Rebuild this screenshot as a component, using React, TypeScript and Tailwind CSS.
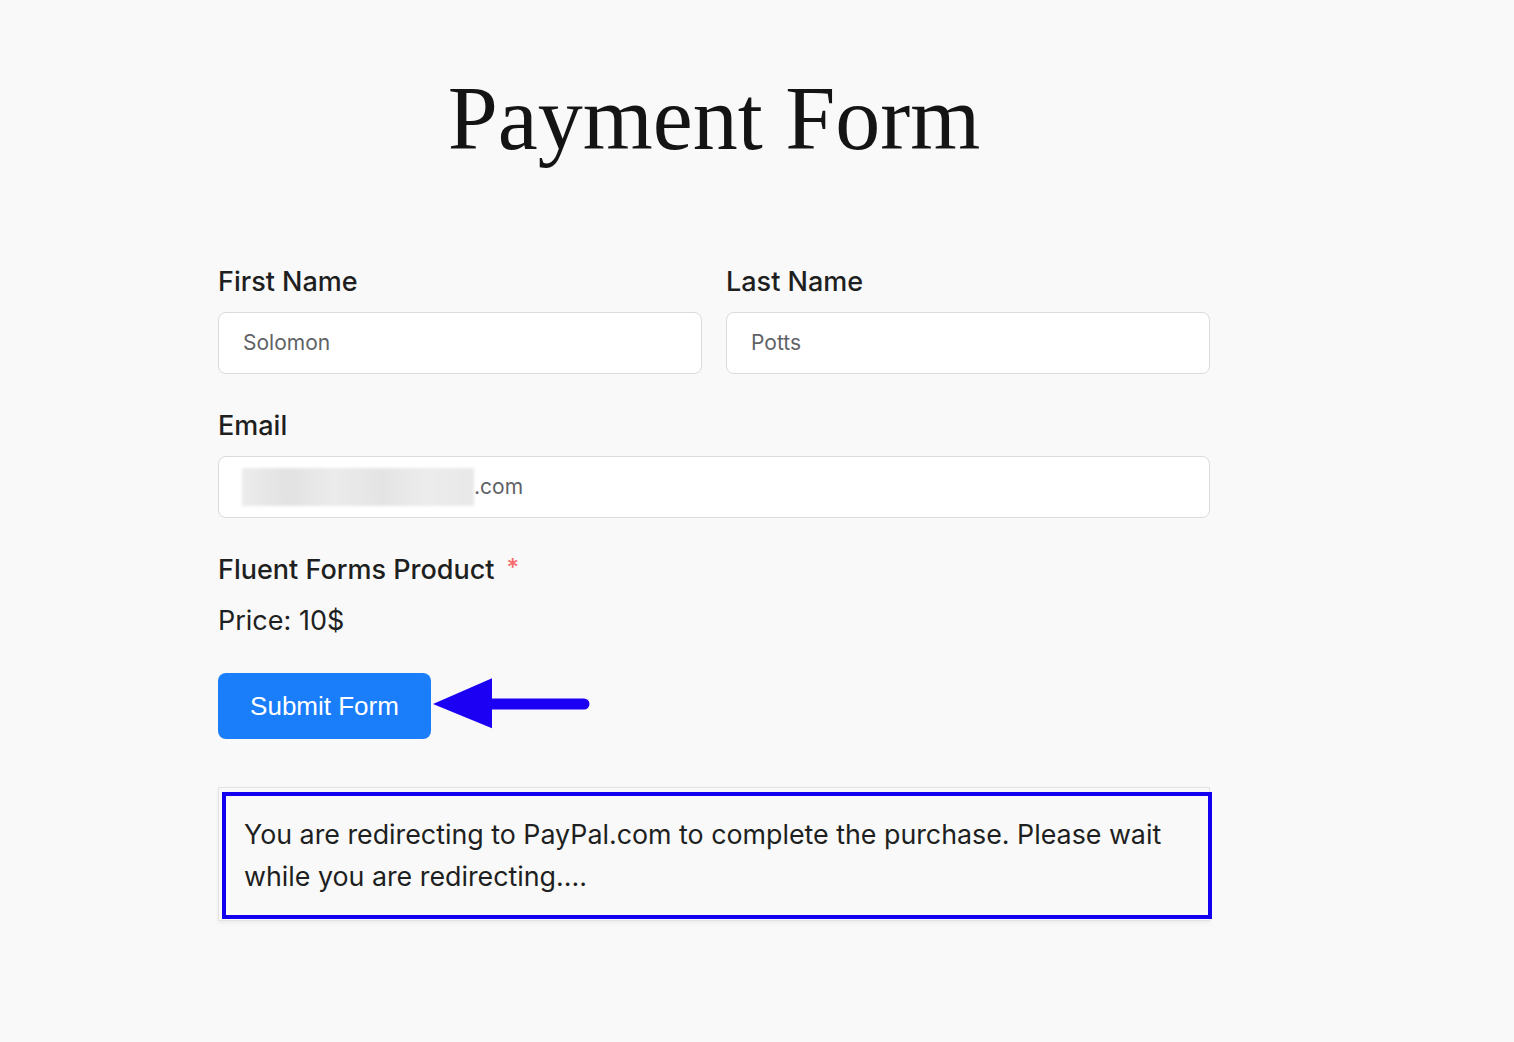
import React from "react";

const inter = "font-['Inter','Noto_Sans',sans-serif]";

function Label({ children, required }: { children: React.ReactNode; required?: boolean }) {
  return (
    <label className={`mb-[13px] block text-[27px] font-medium leading-[34px] text-[#1e1f21] ${inter}`}>
      {children}
      {required && <span className="relative -top-[3px] ml-[12px] text-[24px] text-[#f56c6c]">*</span>}
    </label>
  );
}

function Field({ children }: { children: React.ReactNode }) {
  return (
    <div className="flex h-[62px] items-center rounded-[8px] border border-[#dadbdd] bg-white pl-[24px] text-[21px] text-[#606266]">
      {children}
    </div>
  );
}

function ArrowMark() {
  return (
    <svg width="162" height="56" viewBox="0 0 162 56" className="-mt-[4px]">
      <polygon points="2,28 61,2.3 61,52.3" fill="#1b00f3" />
      <line x1="60" y1="28" x2="153" y2="28" stroke="#1b00f3" strokeWidth="11" strokeLinecap="round" />
    </svg>
  );
}

export default function App() {
  return (
    <div className={`min-h-[1042px] w-full bg-[#f9f9f9] ${inter}`}>
      <div className="ml-[218px] w-[992px] pt-[74px]">
        <h1 className="text-center font-['Liberation_Serif',serif] text-[90px] font-normal leading-[90px] text-[#141414]">
          Payment Form
        </h1>

        <div className="mt-[101px] grid grid-cols-2 gap-[24px]">
          <div>
            <Label>First Name</Label>
            <Field>Solomon</Field>
          </div>
          <div>
            <Label>Last Name</Label>
            <Field>Potts</Field>
          </div>
        </div>

        <div className="mt-[35px]">
          <Label>Email</Label>
          <Field>
            <span className="-ml-[1px] h-[38px] w-[232px] bg-[linear-gradient(90deg,#ececec,#e2e2e2_20%,#ebebeb_40%,#e4e4e4_60%,#ececec_80%,#e8e8e8)] blur-[1.5px]" />
            <span>.com</span>
          </Field>
        </div>

        <div className="mt-[35px]">
          <Label required>Fluent Forms Product</Label>
          <p className="mt-[16px] text-[27px] leading-[34px] text-[#1e1f21]">Price: 10$</p>
        </div>

        <div className="mt-[35px] flex items-center">
          <button className="h-[66px] w-[213px] rounded-[8px] bg-[#1a7efb] font-['Liberation_Sans',Arial,sans-serif] text-[26px] text-white">
            Submit Form
          </button>
          <ArrowMark />
        </div>

        <div className="mt-[48px] border border-[#e3e3e3] pt-[4px] pl-[3px] pb-[1px] shadow-[0_2px_4px_rgba(0,0,0,0.06)]">
          <div className="-mr-[3px] border-[4px] border-[#1400f0] pt-[17px] pb-[18px] pl-[18px] text-[26.8px] leading-[42px] text-[#1e1f21]">
            You are redirecting to PayPal.com to complete the purchase. Please wait
            <br />
            while you are redirecting....
          </div>
        </div>
      </div>
    </div>
  );
}
